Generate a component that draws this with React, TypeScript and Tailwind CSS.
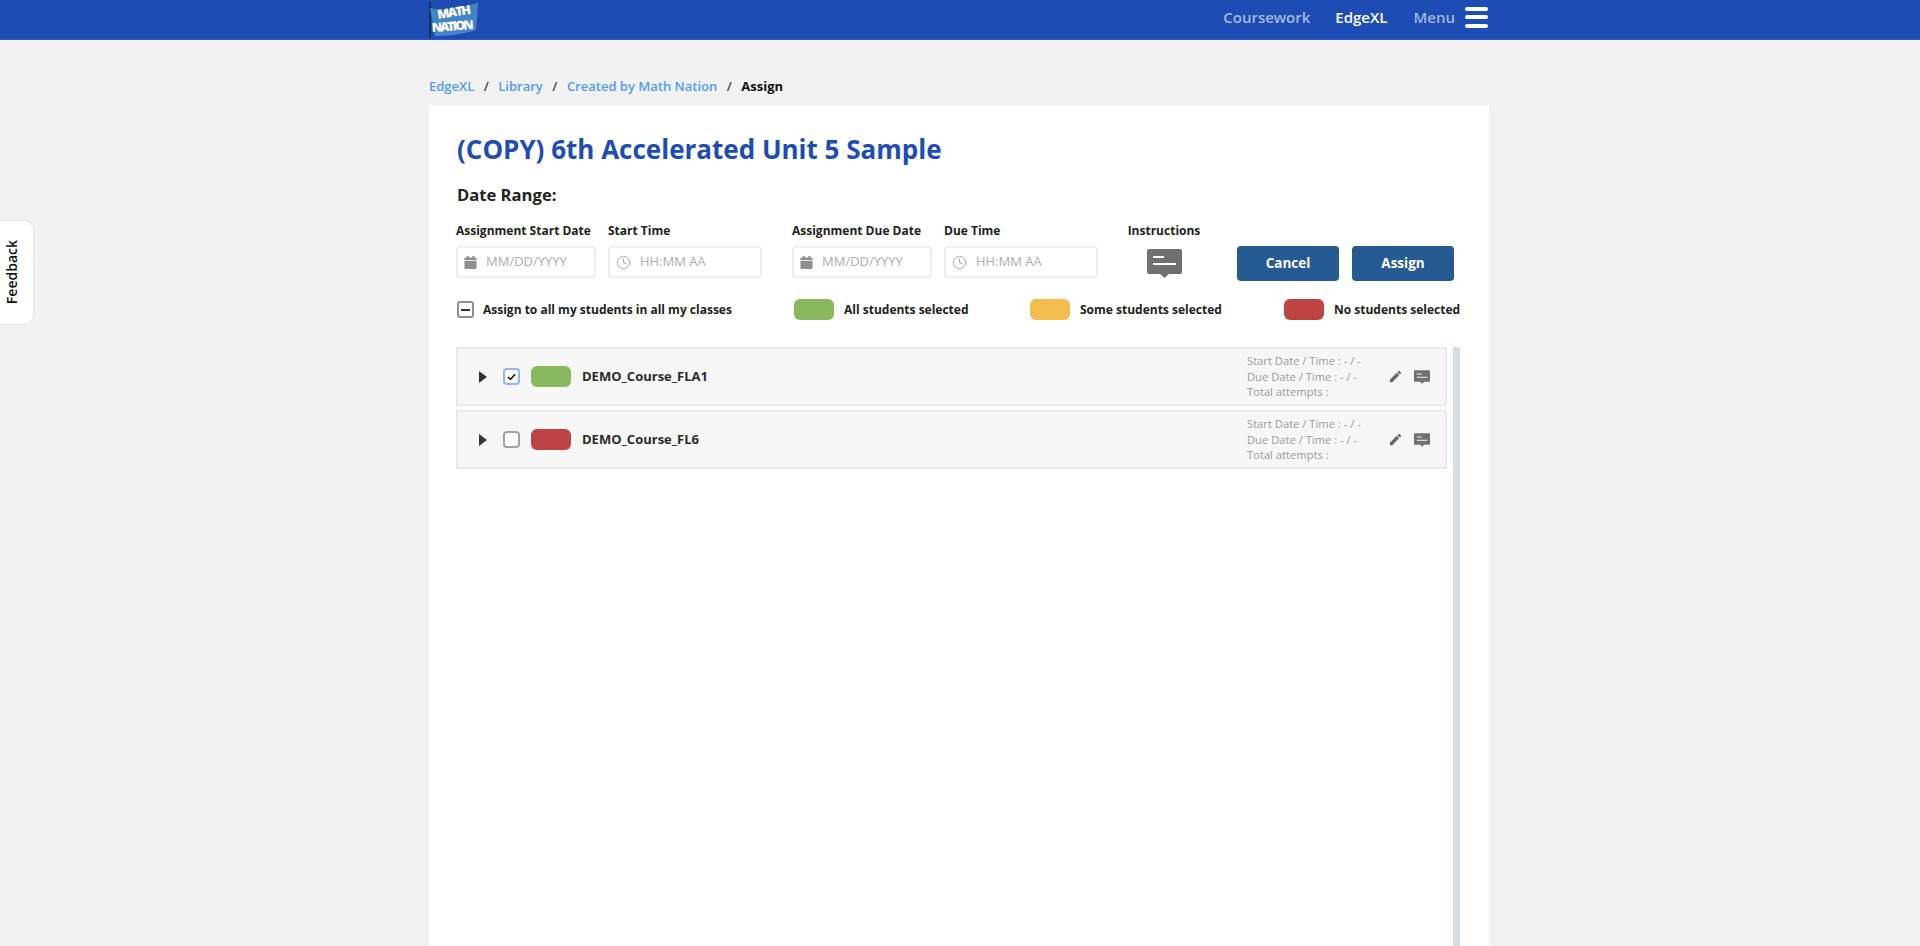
import { Clock } from 'lucide-react'

const font = { fontFamily: '"Open Sans", sans-serif' }

function MessageIcon({ className }: { className: string }) {
  return (
    <svg viewBox="0 0 35 29" className={className}>
      <path d="M2 0h31a2 2 0 0 1 2 2v21a2 2 0 0 1-2 2h-11l-4.500 4-4.500-4H2a2 2 0 0 1-2-2V2a2 2 0 0 1 2-2z" fill="#707070" />
      <rect x="6" y="7" width="11" height="2" fill="#fff" />
      <rect x="6" y="14" width="23" height="2" fill="#fff" />
    </svg>
  )
}

function CalendarIcon() {
  return (
    <svg viewBox="0 0 14 14" className="w-[13px] h-[13px] shrink-0">
      <rect x="3" y="0" width="2" height="3" fill="#8f8f8f" />
      <rect x="9" y="0" width="2" height="3" fill="#8f8f8f" />
      <path d="M1.500 1.500h11a1 1 0 0 1 1 1V4.500H.5V2.500a1 1 0 0 1 1-1z" fill="#8f8f8f" />
      <path d="M.5 5.500h13V13a1 1 0 0 1-1 1h-11a1 1 0 0 1-1-1z" fill="#8f8f8f" />
    </svg>
  )
}

function Logo() {
  return (
    <svg viewBox="0 0 50 36" className="w-[50px] h-[36px]">
      <rect x="0" y="0" width="2" height="36" fill="#1b2f55" />
      <path d="M1 6 C14 9 30 6 49 1 L47 28 C32 33 16 34 6 34 Z" fill="#4384c8" />
      <g fill="#fff" fontFamily="'Open Sans', sans-serif" fontWeight="800">
        <text x="9" y="17" fontSize="12.500" textLength="34" transform="rotate(-9 9 17)">MATH</text>
        <text x="3" y="30" fontSize="12.500" textLength="42" transform="rotate(-4 3 30)">NATION</text>
      </g>
    </svg>
  )
}

function Field({ label, width, placeholder, icon }: { label: string; width: string; placeholder: string; icon: 'date' | 'time' }) {
  return (
    <div className={`${width} shrink-0 flex flex-col`}>
      <span className="text-[12px] leading-[16px] font-bold text-[#222] mb-[7px] whitespace-nowrap">{label}</span>
      <div className="h-[32px] border-2 border-[#efefef] rounded-[4px] flex items-center pl-[6px] bg-white">
        {icon === 'date' ? <CalendarIcon /> : <Clock className="w-[15px] h-[15px] text-[#a8a8a8] stroke-[1.500]" />}
        <span className="ml-[9px] text-[13px] text-[#adadad]">{placeholder}</span>
      </div>
    </div>
  )
}

function Legend({ color, label, width }: { color: string; label: string; width: string }) {
  return (
    <div className={`${width} shrink-0 flex items-center`}>
      <span className={`w-[40px] h-[21px] shrink-0 rounded-[6px] ${color}`} />
      <span className="ml-[10px] text-[12px] font-bold text-[#222] whitespace-nowrap">{label}</span>
    </div>
  )
}

function CourseRow({ name, color, checked }: { name: string; color: string; checked: boolean }) {
  return (
    <div className="h-[59px] border-2 border-[#e4ecee] bg-[#f7f7f7] flex items-center">
      <svg viewBox="0 0 8 12" className="ml-[21px] w-[8px] h-[12px]">
        <path d="M0 0l8 6-8 6z" fill="#333" />
      </svg>
      <span
        className={`ml-[16px] w-[17px] h-[17px] rounded-[4px] border-2 flex items-center justify-center bg-white ${
          checked ? 'border-[#8db8f5]' : 'border-[#a3a3a3]'
        }`}
      >
        {checked && (
          <svg viewBox="0 0 10 8" className="w-[9px] h-[8px]">
            <path d="M1 4l3 2.500L9 1" fill="none" stroke="#111" strokeWidth="1.800" />
          </svg>
        )}
      </span>
      <span className={`ml-[11px] w-[40px] h-[21px] rounded-[6px] ${color}`} />
      <span className="ml-[11px] flex-1 text-[13px] font-bold text-[#2b2b2b]">{name}</span>
      <div className="w-[141px] text-[11.200px] leading-[15.500px] text-[#9b9b9b]">
        <div>Start Date / Time : - / -</div>
        <div>Due Date / Time : - / -</div>
        <div>Total attempts :</div>
      </div>
      <svg viewBox="0 0 24 24" className="w-[15px] h-[15px]">
        <path d="M3 17.250V21h3.750L17.810 9.940l-3.750-3.750L3 17.250zM20.710 7.040a1 1 0 0 0 0-1.410l-2.340-2.340a1 1 0 0 0-1.410 0l-1.830 1.830 3.750 3.750 1.830-1.830z" fill="#666" />
      </svg>
      <MessageIcon className="ml-[11px] mr-[15px] w-[16px] h-[14px]" />
    </div>
  )
}

export default function App() {
  return (
    <div style={font} className="relative h-[946px] overflow-hidden bg-[#f2f2f2] flex flex-col">
      <header className="h-[40px] shrink-0 bg-[#1d4cb5] border-b border-[#2a5cc8]">
        <div className="ml-[429px] w-[1060px] h-full flex items-center">
          <Logo />
          <nav className="ml-auto pb-[5px] flex items-center text-[15px] font-semibold">
            <span className="text-[#a5b9e3]">Coursework</span>
            <span className="ml-[25px] text-white">EdgeXL</span>
            <span className="ml-[26px] text-[#a5b9e3]">Menu</span>
            <span className="ml-[10px] mr-[1px] w-[23px] flex flex-col gap-[4.500px]">
              <span className="h-[4px] rounded-full bg-white" />
              <span className="h-[4px] rounded-full bg-white" />
              <span className="h-[4px] rounded-full bg-white" />
            </span>
          </nav>
        </div>
      </header>

      <main className="ml-[429px] w-[1060px] flex-1 flex flex-col min-h-0">
        <div className="h-[65px] shrink-0 flex items-end pb-[9px] text-[13px] font-semibold text-[#4f9bf9]">
          <span>EdgeXL</span>
          <span className="mx-[9.500px] text-[#444]">/</span>
          <span>Library</span>
          <span className="mx-[9.500px] text-[#444]">/</span>
          <span>Created by Math Nation</span>
          <span className="mx-[9.500px] text-[#444]">/</span>
          <span className="text-[#111] font-bold">Assign</span>
        </div>

        <section className="flex-1 bg-white pl-[27px] pt-[25px] flex flex-col min-h-0">
          <h1 className="ml-[1px] text-[26px] leading-[38px] font-bold text-[#1d4cb5]">(COPY) 6th Accelerated Unit 5 Sample</h1>
          <h2 className="ml-[1px] mt-[16px] text-[16.600px] leading-[22px] font-bold text-[#222]">Date Range:</h2>

          <div className="mt-[17px] flex items-start">
            <Field label="Assignment Start Date" width="w-[140px]" placeholder="MM/DD/YYYY" icon="date" />
            <div className="w-[12px]" />
            <Field label="Start Time" width="w-[154px]" placeholder="HH:MM AA" icon="time" />
            <div className="w-[30px]" />
            <Field label="Assignment Due Date" width="w-[140px]" placeholder="MM/DD/YYYY" icon="date" />
            <div className="w-[12px]" />
            <Field label="Due Time" width="w-[154px]" placeholder="HH:MM AA" icon="time" />
            <div className="ml-[29px] w-[74px] shrink-0 flex flex-col items-center">
              <span className="text-[12px] leading-[16px] font-bold text-[#222] mb-[10px]">Instructions</span>
              <MessageIcon className="w-[35px] h-[29px]" />
            </div>
            <div className="ml-[36px] mt-[23px] flex gap-[13px]">
              <button className="w-[102px] h-[35px] rounded-[4px] bg-[#255a92] text-white text-[13.500px] font-bold">Cancel</button>
              <button className="w-[102px] h-[35px] rounded-[4px] bg-[#255a92] text-white text-[13.500px] font-bold">Assign</button>
            </div>
          </div>

          <div className="mt-[18px] h-[21px] flex items-center">
            <div className="w-[338px] shrink-0 flex items-center">
              <span className="ml-[1px] w-[17px] h-[17px] border-2 border-[#8f8f8f] rounded-[3px] flex items-center justify-center">
                <span className="w-[9px] h-[2px] bg-[#333]" />
              </span>
              <span className="ml-[9px] text-[12px] font-bold text-[#222]">Assign to all my students in all my classes</span>
            </div>
            <Legend color="bg-[#8ab85c]" label="All students selected" width="w-[236px]" />
            <Legend color="bg-[#f3bd4e]" label="Some students selected" width="w-[254px]" />
            <Legend color="bg-[#bd4442]" label="No students selected" width="w-[170px]" />
          </div>

          <div className="mt-[27px] flex-1 flex min-h-0">
            <div className="w-[991px] flex flex-col gap-[4px]">
              <CourseRow name="DEMO_Course_FLA1" color="bg-[#8ab85c]" checked />
              <CourseRow name="DEMO_Course_FL6" color="bg-[#bd4442]" checked={false} />
            </div>
            <div className="ml-[6px] w-[7px] bg-[#d5e0e3]" />
          </div>
        </section>
      </main>

      <div className="absolute left-0 top-[220px] w-[34px] h-[105px] bg-white border border-l-0 border-[#dfe7ec] rounded-r-[10px] flex items-center justify-center">
        <span className="[writing-mode:vertical-rl] rotate-180 text-[14px] font-semibold text-[#111] -ml-[11px]">Feedback</span>
      </div>
    </div>
  )
}
